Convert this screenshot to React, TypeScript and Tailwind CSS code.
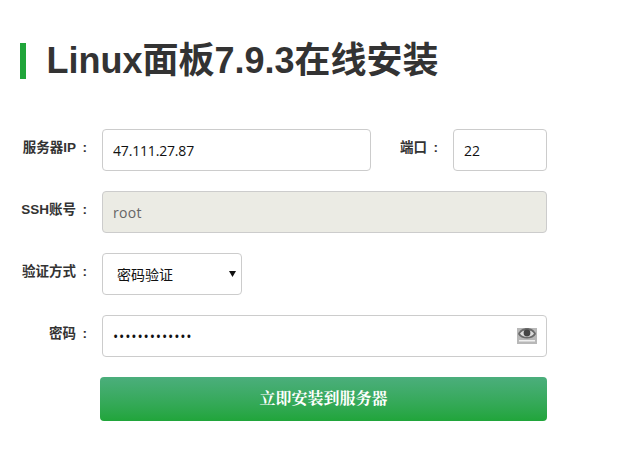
import React from "react";

const font = "font-['Liberation_Sans','Noto_Sans_CJK_SC',sans-serif]";
const inputText = "font-['Open_Sans','Noto_Sans_CJK_SC',sans-serif]";
const box =
  "h-[42px] rounded-[4px] border border-[#cccccc] pl-[10px] text-[14px] outline-none " + inputText;
const label = "w-[70px] pb-[4px] text-[13.5px] font-bold text-[#333333] text-right leading-[20px] whitespace-nowrap";

function Label({ text }: { text: string }) {
  return (
    <div className={label}>
      {text}
      <span className="inline-block w-[14px] pr-[3px] text-right">:</span>
    </div>
  );
}

export default function App() {
  return (
    <div className={"w-[622px] h-[460px] bg-white pt-[43px] overflow-hidden " + font}>
      <div className="flex items-center pl-[20px]">
        <div className="w-[6px] h-[36px] bg-[#20a53a]" />
        <h1 className="ml-[20.5px] text-[36px] leading-[36px] font-bold text-[#333333]">
          Linux面板7.9.3在线安装
        </h1>
      </div>

      <div className="mt-[50px] ml-[20px] w-[527px] flex flex-col gap-[20px]">
        <div className="flex items-center">
          <Label text="服务器IP" />
          <input
            className={"ml-[12px] w-[269px] text-[#111111] tracking-[-0.17px] " + box}
            defaultValue="47.111.27.87"
          />
          <Label text="端口" />
          <input className={"ml-[12px] w-[94px] text-[#111111] " + box} defaultValue="22" />
        </div>

        <div className="flex items-center">
          <Label text="SSH账号" />
          <input
            disabled
            className={"ml-[12px] flex-1 bg-[#ebebe4] text-[#666666] tracking-[0.3px] " + box}
            defaultValue="root"
          />
        </div>

        <div className="flex items-center">
          <Label text="验证方式" />
          <div className="relative ml-[12px] w-[140px]">
            <select
              defaultValue="password"
              className={"appearance-none w-full bg-white text-[#111111] pl-[14px] " + box}
            >
              <option value="password">密码验证</option>
            </select>
            <svg
              className="absolute right-[6px] top-[17px] w-[7px] h-[7px]"
              viewBox="0 0 7 7"
              aria-hidden="true"
            >
              <path d="M0 1h7L3.5 7z" fill="#111111" />
            </svg>
          </div>
        </div>

        <div className="flex items-center">
          <Label text="密码" />
          <div className="relative ml-[12px] flex-1">
            <input
              type="password"
              className={"w-full text-[#111111] tracking-[0.85px] " + box}
              defaultValue="1234567890123"
            />
            <svg
              className="absolute right-[10px] top-[12px] w-[20px] h-[17px]"
              viewBox="0 0 20 17"
              aria-hidden="true"
            >
              <rect x="0" y="1" width="20" height="16" fill="#b8b8b8" />
              <path d="M1 7C4 -1 16 -1 19 7C16 13 4 13 1 7z" fill="#6a6a6a" />
              <path d="M3 6.5C5.5 2 14.5 2 17 6.5C14.5 11 5.5 11 3 6.5z" fill="#dcdcdc" />
              <circle cx="10" cy="6" r="3.4" fill="#454545" />
              <rect x="2" y="13" width="16" height="1.5" fill="#f0f0f0" />
            </svg>
          </div>
        </div>
      </div>

      <button className="mt-[20px] ml-[100px] block w-[447px] h-[44px] rounded-[4px] bg-gradient-to-b from-[#4bae7c] to-[#20a53a] text-white text-[16px] font-bold font-['Liberation_Serif','Noto_Serif_CJK_SC','Noto_Sans_CJK_SC',serif]">
        立即安装到服务器
      </button>
    </div>
  );
}
